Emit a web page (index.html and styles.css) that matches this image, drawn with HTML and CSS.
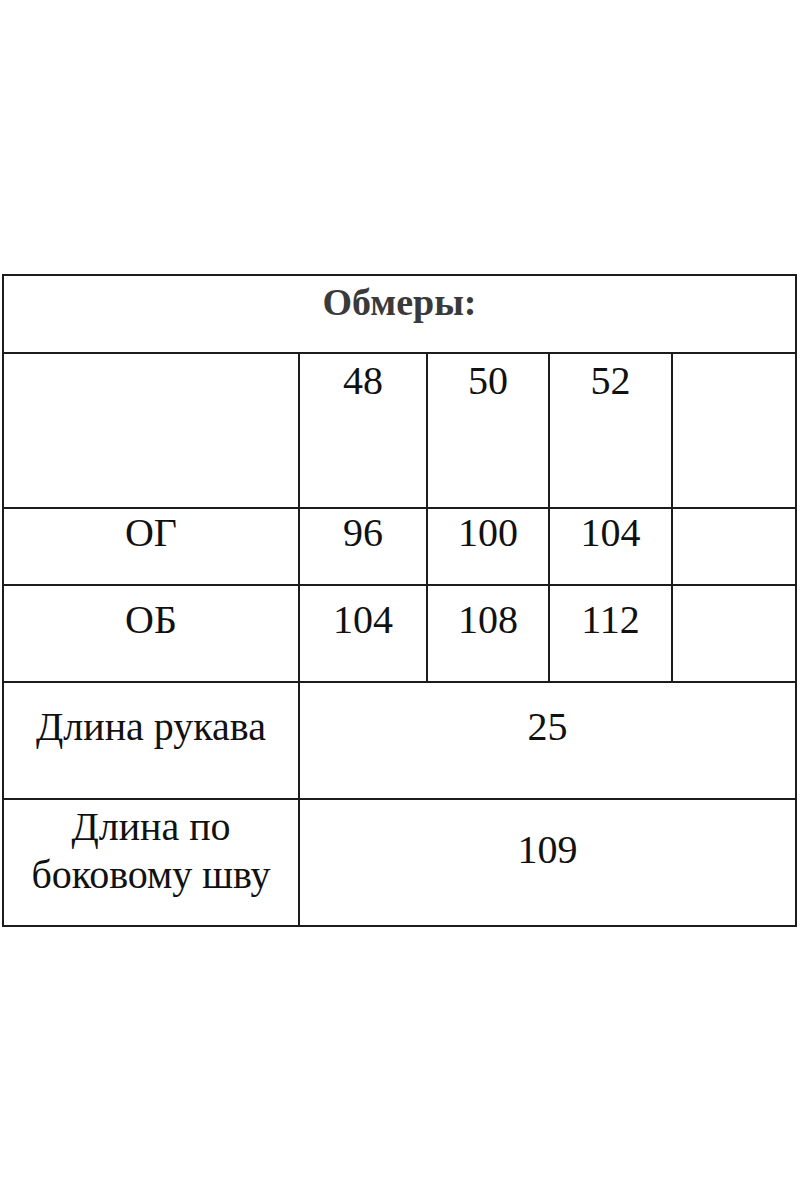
FILE: index.html
```html
<!DOCTYPE html>
<html lang="ru">
<head>
<meta charset="utf-8">
<title>Обмеры</title>
<link rel="stylesheet" href="styles.css">
</head>
<body>
<div class="sheet">
  <table class="sizes">
    <colgroup>
      <col class="c-label">
      <col class="c-s1">
      <col class="c-s2">
      <col class="c-s3">
      <col class="c-s4">
    </colgroup>
    <tr class="r-head">
      <th colspan="5">Обмеры:</th>
    </tr>
    <tr class="r-sizes">
      <td></td>
      <td>48</td>
      <td>50</td>
      <td>52</td>
      <td></td>
    </tr>
    <tr class="r-og">
      <td>ОГ</td>
      <td>96</td>
      <td>100</td>
      <td>104</td>
      <td></td>
    </tr>
    <tr class="r-ob">
      <td>ОБ</td>
      <td>104</td>
      <td>108</td>
      <td>112</td>
      <td></td>
    </tr>
    <tr class="r-sleeve">
      <td>Длина рукава</td>
      <td colspan="4">25</td>
    </tr>
    <tr class="r-side">
      <td>Длина по<br>боковому шву</td>
      <td colspan="4" class="mid">109</td>
    </tr>
  </table>
</div>
</body>
</html>
```

FILE: styles.css
```css
html, body {
  margin: 0;
  padding: 0;
  background: #ffffff;
}

.sheet {
  padding: 274px 3px 0 2px;
}

.sizes {
  width: 100%;
  border-collapse: collapse;
  table-layout: fixed;
  font-family: "Liberation Serif", "DejaVu Serif", serif;
  font-size: 40px;
  line-height: 48px;
  color: #111111;
}

.c-label { width: 296px; }
.c-s1 { width: 128px; }
.c-s2 { width: 122px; }
.c-s3 { width: 123px; }
.c-s4 { width: auto; }

.sizes th,
.sizes td {
  border: 2px solid #1c1c1c;
  text-align: center;
  vertical-align: top;
  padding: 0 2px;
  box-sizing: border-box;
}

.sizes th {
  font-weight: bold;
  font-size: 38px;
  color: #3a3a3a;
  padding-top: 2px;
}

.r-head th { height: 78px; }

.r-sizes td { height: 155px; padding-top: 3px; }
.r-og td { height: 77px; padding-top: 0; }
.r-ob td { height: 97px; padding-top: 10px; }
.r-sleeve td { height: 117px; padding-top: 20px; }
.r-side td { height: 127px; padding-top: 3px; }
.r-side td.mid { padding-top: 26px; }
```
